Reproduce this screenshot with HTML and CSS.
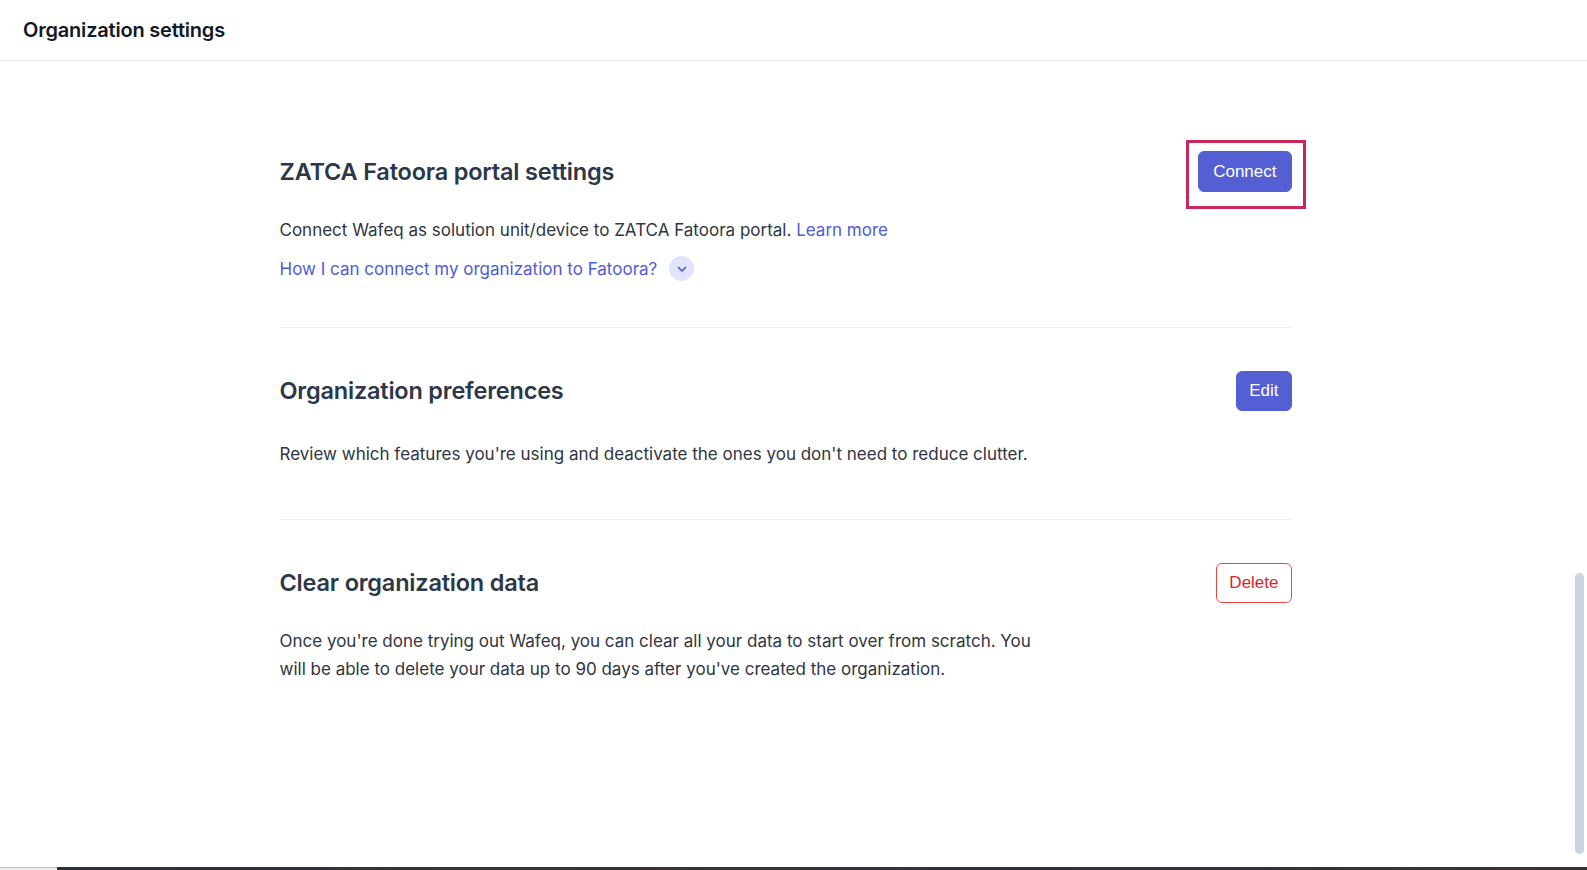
FILE: index.html
```html
<!DOCTYPE html>
<html lang="en">
<head>
    <meta charset="UTF-8">
    <title>Organization settings</title>
    <link rel="stylesheet" href="styles.css">
</head>
<body>

<header class="topbar">
    <h1>Organization settings</h1>
</header>

<div class="workspace">
    <main class="settings">
        <section class="block">
            <div class="block-head">
                <h2>ZATCA Fatoora portal settings</h2>
                <span class="focus-ring">
                    <button class="btn btn-primary btn-wide">Connect</button>
                </span>
            </div>
            <p class="block-text">Connect Wafeq as solution unit/device to ZATCA Fatoora portal. <a href="#">Learn more</a></p>
            <div class="howto">
                <a href="#">How I can connect my organization to Fatoora?</a>
                <span class="chevron">
                    <svg width="14" height="14" viewBox="0 0 14 14"><path d="M3.5 5.5 7 9l3.5-3.5" fill="none" stroke="currentColor" stroke-width="1.7" stroke-linecap="round" stroke-linejoin="round"/></svg>
                </span>
            </div>
        </section>

        <section class="block roomy">
            <div class="block-head">
                <h2>Organization preferences</h2>
                <button class="btn btn-primary">Edit</button>
            </div>
            <p class="block-text">Review which features you're using and deactivate the ones you don't need to reduce clutter.</p>
        </section>

        <section class="block last">
            <div class="block-head">
                <h2>Clear organization data</h2>
                <button class="btn btn-danger">Delete</button>
            </div>
            <p class="block-text narrow">Once you're done trying out Wafeq, you can clear all your data to start over from scratch. You will be able to delete your data up to 90 days after you've created the organization.</p>
        </section>
    </main>

    <div class="scroll-track">
        <div class="scroll-thumb"></div>
    </div>
</div>

<div class="taskbar">
    <span class="taskbar-start"></span>
    <span class="taskbar-rest"></span>
</div>

</body>
</html>
```

FILE: styles.css
```css
* {
    box-sizing: border-box;
}

html, body {
    height: 100%;
}

body {
    margin: 0;
    font-family: Inter, "Noto Sans", sans-serif;
    color: #2f3542;
    background: #fff;
    display: flex;
    flex-direction: column;
    overflow: hidden;
}

.topbar {
    height: 61px;
    flex-shrink: 0;
    display: flex;
    align-items: center;
    padding: 0 23px;
    border-bottom: 1px solid #e7e8ee;
}

.topbar h1 {
    margin: 0;
    font-size: 20px;
    font-weight: 600;
    color: #111827;
    letter-spacing: -0.2px;
}

.workspace {
    flex: 1;
    display: flex;
    min-height: 0;
}

.settings {
    flex: 1;
    padding-top: 90px;
}

.block {
    width: 1012px;
    margin: 0 auto 42px;
    padding-bottom: 46px;
    border-bottom: 1px solid #f1f1f3;
}

.block.roomy {
    padding-bottom: 52px;
}

.block.roomy .block-text {
    margin-top: 30px;
}

.block.last {
    border-bottom: none;
}

.block-head {
    display: flex;
    align-items: center;
    justify-content: space-between;
    min-height: 41px;
}

.block-head h2 {
    margin: 0;
    font-size: 23.5px;
    font-weight: 600;
    color: #2d3748;
    letter-spacing: -0.2px;
}

.block-text {
    margin: 25px 0 0;
    font-size: 17px;
    line-height: 26px;
}

.block-text.narrow {
    max-width: 752px;
    margin-top: 24px;
    line-height: 28px;
}

a {
    color: #4f5bd5;
    text-decoration: none;
}

.howto {
    display: flex;
    align-items: center;
    gap: 12px;
    margin-top: 13px;
    font-size: 17px;
}

.chevron {
    width: 25px;
    height: 25px;
    border-radius: 50%;
    background: #e1e4fc;
    color: #5058d8;
    display: flex;
    align-items: center;
    justify-content: center;
}

/* keyboard focus outline around the connect action */
.focus-ring {
    display: inline-flex;
    padding: 8px 11px 14px 9px;
    margin: -11px -14px -17px 0;
    border: 3px solid #c8285a;
}

.btn {
    font-family: "Liberation Sans", Arial, sans-serif;
    font-size: 17px;
    border-radius: 6px;
    height: 40px;
    padding: 0 12px;
    cursor: pointer;
}

.btn-wide {
    padding: 0 14px;
}

.btn-primary {
    background: #535fd3;
    border: 1px solid #535fd3;
    color: #fff;
}

.focus-ring .btn {
    height: 41px;
}

.btn-danger {
    background: #fff;
    border: 1px solid #ef4444;
    color: #e11d2e;
}

.scroll-track {
    width: 16px;
    flex-shrink: 0;
    padding: 512px 3px 13px 4px;
}

.scroll-thumb {
    height: 100%;
    border-radius: 5px;
    background: #cbd5e1;
}

.taskbar {
    height: 3px;
    flex-shrink: 0;
    display: flex;
}

.taskbar-start {
    width: 57px;
    background: #ececec;
    border-top: 1px solid #c4c4c4;
}

.taskbar-rest {
    flex: 1;
    background: linear-gradient(90deg, #2c323c, #3a3433 40%, #2e3240 60%, #3a3230);
}
```
